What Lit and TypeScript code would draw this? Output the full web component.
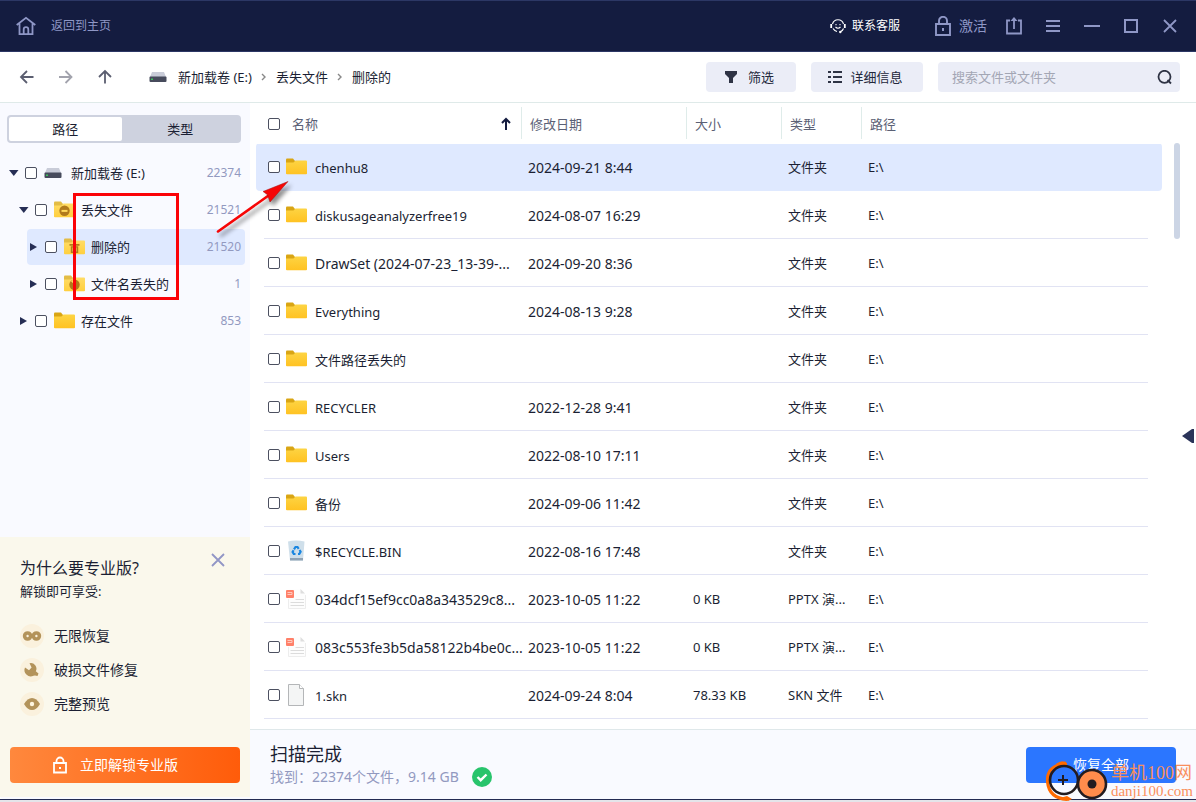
import { LitElement, html, css, svg } from "lit";
import { customElement } from "lit/decorators.js";
import { classMap } from "lit/directives/class-map.js";

type Badge = "minus" | "trash" | "clock" | "";
interface Node { name: string; count: string; depth: number; open: boolean; icon: "disk" | "folder"; badge: Badge; active?: boolean }
interface Item { name: string; date: string; size: string; type: string; icon: "folder" | "bin" | "pptx" | "file" }

const TREE: Node[] = [
  { name: "新加载卷 (E:)", count: "22374", depth: 0, open: true, icon: "disk", badge: "" },
  { name: "丢失文件", count: "21521", depth: 1, open: true, icon: "folder", badge: "minus" },
  { name: "删除的", count: "21520", depth: 2, open: false, icon: "folder", badge: "trash", active: true },
  { name: "文件名丢失的", count: "1", depth: 2, open: false, icon: "folder", badge: "clock" },
  { name: "存在文件", count: "853", depth: 1, open: false, icon: "folder", badge: "" },
];

const DIR = "文件夹";
const ITEMS: Item[] = [
  { name: "chenhu8", date: "2024-09-21 8:44", size: "", type: DIR, icon: "folder" },
  { name: "diskusageanalyzerfree19", date: "2024-08-07 16:29", size: "", type: DIR, icon: "folder" },
  { name: "DrawSet (2024-07-23_13-39-...", date: "2024-09-20 8:36", size: "", type: DIR, icon: "folder" },
  { name: "Everything", date: "2024-08-13 9:28", size: "", type: DIR, icon: "folder" },
  { name: "文件路径丢失的", date: "", size: "", type: DIR, icon: "folder" },
  { name: "RECYCLER", date: "2022-12-28 9:41", size: "", type: DIR, icon: "folder" },
  { name: "Users", date: "2022-08-10 17:11", size: "", type: DIR, icon: "folder" },
  { name: "备份", date: "2024-09-06 11:42", size: "", type: DIR, icon: "folder" },
  { name: "$RECYCLE.BIN", date: "2022-08-16 17:48", size: "", type: DIR, icon: "bin" },
  { name: "034dcf15ef9cc0a8a343529c8...", date: "2023-10-05 11:22", size: "0 KB", type: "PPTX 演...", icon: "pptx" },
  { name: "083c553fe3b5da58122b4be0c...", date: "2023-10-05 11:22", size: "0 KB", type: "PPTX 演...", icon: "pptx" },
  { name: "1.skn", date: "2024-09-24 8:04", size: "78.33 KB", type: "SKN 文件", icon: "file" },
];

const diskIcon = html`<svg width="18" height="12" viewBox="0 0 18 12">
  <path d="M3 1h12l2 5H1z" fill="#c9ccd8"/><rect x=".5" y="5.5" width="17" height="5.5" rx="1" fill="#474b5c"/>
  <rect x="2" y="7.5" width="2" height="1.5" fill="#3fc25d"/></svg>`;

const folderIcon = (badge: Badge = "") => html`<svg width="21" height="18" viewBox="0 0 21 18">
  <defs><linearGradient id="f" x1="0" y1="0" x2="0" y2="1"><stop offset="0" stop-color="#fdd443"/><stop offset="1" stop-color="#ffc222"/></linearGradient>
  <linearGradient id="g" x1="0" y1="0" x2="0" y2="1"><stop offset="0" stop-color="#ffdc66"/><stop offset="1" stop-color="#ffcf3e"/></linearGradient></defs>
  <path d="M0 1.500Q0 .5 1 .5h6l2 2.500v2H0z" fill=${badge ? "#e3bc45" : "#d9a514"}/>
  <path d="M0 4.500h7.500l2-2H20q1 0 1 1V15.500q0 .8-1 .8H1q-1 0-1-.8z" fill=${badge ? "url(#g)" : "url(#f)"}/>
  ${badge === "minus" ? svg`<circle cx="10.500" cy="9.800" r="5.200" fill="#b17a1c"/><rect x="7.500" y="8.900" width="6" height="2" fill="#ffd95c"/>` : ""}
  ${badge === "trash" ? svg`<path d="M5.500 6h3.500V4.800h3V6h3.500v1.800h-10zM6.800 8.300h7.400V15H6.800z" fill="#b17a1c"/><path d="M9 9.500v4M12 9.500v4" stroke="#ffd95c"/>` : ""}
  ${badge === "clock" ? svg`<circle cx="10.500" cy="9.800" r="5.200" fill="#b17a1c"/><path d="M10.500 9.800 7 6.200a5 5 0 0 1 3.500-1.600z" fill="#ffd95c"/>` : ""}
</svg>`;

const binIcon = html`<svg width="21" height="22" viewBox="0 0 21 22">
  <path d="M2 1.500q8-2 16.500 0L17 20.500H4z" fill="#cfdfea"/><path d="M4 18h13v2.500H4z" fill="#8fa3b5"/>
  <g fill="none" stroke="#1a86e0" stroke-width="2.200"><path d="M8 9.300 9.500 7h2l1.200 1.800"/><path d="M13.600 10l1 1.700-1.300 2.300H12"/><path d="M9.500 14H7.800l-1.200-2 1-1.700"/></g></svg>`;

const pptxIcon = html`<svg width="21" height="22" viewBox="0 0 21 22">
  <path d="M2.500 1.500h12l5 5v14h-17z" fill="#fdfdfd"/><path d="M2.500 11v9.500h17V7" fill="none" stroke="#ededed"/><path d="M14.500 1v4.500H19z" fill="#dedede"/>
  <rect x="0" y="2" width="8" height="8" rx="1" fill="#ff8069"/><path d="M1.500 4.500h4.500v2H1.500" fill="none" stroke="#ffc9bd"/>
  <path d="M9.500 11.500H18M4.500 14.500H18M4.500 17.500H18" stroke="#dcdcdc"/></svg>`;

const fileIcon = html`<svg width="21" height="24" viewBox="0 0 21 24">
  <path d="M2.500 1.500h11l4 4v17h-15z" fill="#f4f5f5" stroke="#b4b6b8"/><path d="M13.500 1.500v4h4" fill="#fff" stroke="#b4b6b8"/></svg>`;

const ITEM_ICONS = { folder: folderIcon(), bin: binIcon, pptx: pptxIcon, file: fileIcon };

@customElement("app-root")
export class AppRoot extends LitElement {
  static styles = css`
    :host {
      display: flex; flex-direction: column; position: relative; box-sizing: border-box;
      height: 100vh; padding-bottom: 2px; background: #e4e5ea; overflow: hidden;
      font: 13px/20px "Noto Sans", "Noto Sans CJK SC", sans-serif; color: #1b1f33;
    }
    * { box-sizing: border-box; }
    svg { display: block; flex: none; }
    button { font: inherit; color: inherit; border: 0; padding: 0; background: none; display: flex; align-items: center; }
    a { color: inherit; text-decoration: none; }
    .box { appearance: none; flex: none; width: 12px; height: 12px; margin: 0; border: 1px solid #4c5060; border-radius: 2px; background: #fff; }

    .titlebar { display: flex; align-items: center; height: 52px; flex: none; padding: 0 17px 0 16px; background: #141c40; border-top: 1px solid #2c3765; border-bottom: 1px solid #2c3765; color: #8f97c6; }
    .home { gap: 15px; font-size: 12px; }
    .spacer { flex: 1; }
    .service { gap: 6px; font-size: 12px; color: #fff; margin-right: 34px; }
    .activate { gap: 7px; font-size: 14px; margin-right: 18px; }
    .tools { display: flex; gap: 21px; }

    .toolbar { display: flex; align-items: center; height: 51px; flex: none; padding: 0 16px 0 19px; background: #fff; border-bottom: 1px solid #dfeae9; }
    .arrows { display: flex; gap: 23px; }
    .crumbs { display: flex; align-items: center; gap: 9px; margin-left: 36px; flex: 1; }
    .crumbs svg:first-child { margin-right: 2px; }
    .chip { height: 30px; border-radius: 4px; background: #ebedf7; justify-content: center; margin-right: 15px; padding-right: 4px; gap: 10px; color: #23283b; }
    .filter { width: 90px; }
    .detail { width: 112px; gap: 8px; }
    .search { display: flex; align-items: center; width: 242px; height: 30px; border-radius: 4px; background: #ebedf7; padding: 0 8px 0 14px; }
    .search input { flex: 1; min-width: 0; border: 0; outline: 0; background: none; font: inherit; padding: 0; }
    .search input::placeholder { color: #a3a6b4; }

    .body { flex: 1; min-height: 0; display: flex; background: #fff; border-bottom: 1px solid #232b52; }
    .side { width: 250px; flex: none; display: flex; flex-direction: column; background: #f9faff; padding-bottom: 2px; border-radius: 0 0 0 4px; }
    .tabs { display: flex; margin: 12px 9px 0 7px; height: 28px; padding: 2px; border-radius: 4px; background: #ced2df; }
    .tabs button { flex: 1; justify-content: center; border-radius: 2px; }
    .tabs .on { flex: 0 0 49%; background: #fff; }
    .tree { margin-top: 12px; flex: 1; }
    .node { display: flex; align-items: center; height: 36px; margin: 0 5px 1px 7px; padding: 0 4px 0 2px; border-radius: 4px; }
    .d1 { margin-left: 17px; }
    .d2 { margin-left: 27px; }
    .node.active { background: #dfe9ff; }
    .node .box { margin: 0 7px 0 6px; }
    .node label { display: flex; align-items: center; gap: 6px; flex: 1; }
    .pic { width: 21px; display: flex; justify-content: center; flex: none; }
    .node .pic { justify-content: flex-start; }
    .count { font-size: 12px; color: #9299bf; }

    .promo { background: #faf8ec; padding: 17px 10px 14px; }
    .promo-head { display: flex; justify-content: space-between; align-items: flex-start; padding: 0 14px 0 10px; margin-top: -4px; }
    .promo h2 { margin: 6px 0 0; font-size: 16px; line-height: 24px; font-weight: 400; }
    .promo p { margin: 1px 0 0 10px; }
    .perks { list-style: none; margin: 18px 0 0 10px; padding: 0; font-size: 14px; }
    .perks li { display: flex; align-items: center; gap: 10px; height: 34px; }
    .unlock { width: 100%; height: 36px; margin-top: 26px; padding-right: 20px; border-radius: 4px; justify-content: center; gap: 12px; font-size: 14px; color: #fff; background: linear-gradient(90deg, #ff883d, #ff5c0a); }

    .main { flex: 1; min-width: 0; display: flex; flex-direction: column; }
    .files { flex: 1; min-height: 0; display: flex; padding-left: 6px; overflow: hidden; }
    .list { flex: 1; min-width: 0; }
    table { width: 100%; border-collapse: collapse; table-layout: fixed; }
    .c-name { width: 265px; } .c-date { width: 165px; } .c-size { width: 95px; } .c-type { width: 80px; }
    th { height: 40px; padding: 1px 0 0 9px; text-align: left; font-weight: 400; color: #5b6075; background: linear-gradient(#dfecea, #dfecea) no-repeat left center / 1px 32px; }
    th:first-child { background: none; padding-left: 12px; }
    .head { display: flex; align-items: center; gap: 12px; padding-right: 10px; }
    .head label { flex: 1; }
    td { height: 48px; padding: 2px 0 0 7px; white-space: nowrap; }
    td:first-child { padding: 0 0 0 12px; border-radius: 4px 0 0 4px; }
    td:last-child { border-radius: 0 4px 4px 0; }
    td.kind { padding-top: 0; }
    tbody tr { background: linear-gradient(#e1e3f3, #e1e3f3) no-repeat 8px bottom / calc(100% - 22px) 1px; }
    tbody tr.active { background: none; }
    tr.active td { background: linear-gradient(#dfe9ff, #dfe9ff) no-repeat 0 1px; }
    .cell { display: flex; align-items: center; }
    .cell label { padding-top: 2px; }
    .cell .pic { margin: 0 8px 0 6px; }
    .numeric { font-size: 14px; }
    .track { width: 6px; margin: 40px 2px 0 12px; }
    .thumb { height: 96px; border-radius: 3px; background: #ccd5e5; }
    .expand { margin: 40px 2px 0 0; }

    .status { flex: none; height: 70px; display: flex; align-items: center; justify-content: space-between; padding: 0 20px; background: #f9faff; border-top: 1px solid #dfe8ea; }
    .summary { padding-bottom: 2px; }
    .status h1 { margin: 0; font-size: 18px; line-height: 26px; font-weight: 400; }
    .found { display: flex; align-items: center; gap: 13px; font-size: 14px; line-height: 20px; color: #9299bf; }
    .recover { width: 150px; height: 36px; border-radius: 4px; justify-content: center; background: #2b76ff; color: #fff; font-size: 14px; }

    .frame { position: absolute; left: 73px; top: 193px; width: 106px; height: 107px; border: 3px solid #fb0207; pointer-events: none; }
    .pointer { position: absolute; left: 210px; top: 174px; pointer-events: none; filter: drop-shadow(3px 4px 2px rgba(0, 0, 0, .45)); }
    .mark { position: absolute; right: 3px; bottom: 0; display: flex; align-items: center; gap: 1px; pointer-events: none; color: #f98f5c; }
    .mark-text { display: flex; flex-direction: column; }
    .mark-name { font: 18px/20px "Liberation Serif", "Noto Sans CJK SC", serif; }
    .mark-url { font: 15px/17px "Liberation Serif", serif; }
  `;

  private titlebar() {
    return html`<header class="titlebar">
      <button class="home"><svg width="20" height="20" viewBox="0 0 20 20" fill="none" stroke="#8f97c6" stroke-width="1.800"><path d="M.7 9 10 1.800 19.300 9M3.500 7.500v10.600h13V7.500"/><path d="M7.700 18v-4.500a2.300 2.300 0 0 1 4.600 0V18"/></svg><span>返回到主页</span></button>
      <span class="spacer"></span>
      <button class="service"><svg width="16" height="16" viewBox="0 0 16 16" fill="none" stroke="#fff" stroke-width="1.100"><path d="M2.500 6a5.700 5.700 0 0 1 11 0M3 10.500q1.500 2.500 4 3"/><path d="M1.200 6v4M14.800 6v4" stroke-width="1.800"/><path d="M13.500 10.500q-.8 2-2.500 3"/><circle cx="10.300" cy="14" r="1.200" fill="#fff" stroke="none"/><path d="M5.500 9q2.500 2.500 5 0M6 6v1.200M10 6v1.200"/></svg><span>联系客服</span></button>
      <button class="activate"><svg width="18" height="20" viewBox="0 0 18 20" fill="none" stroke="#8f97c6" stroke-width="1.900"><path d="M2 8h14v11H2zM5 8V4.800a4 4 0 0 1 8 0V8"/><path d="M9 12v3" stroke-width="2"/></svg><span>激活</span></button>
      <div class="tools">
        <button aria-label="分享"><svg width="18" height="20" viewBox="0 0 18 20" fill="none" stroke="#8f97c6" stroke-width="1.800"><path d="M5 4.500H2v13h14v-13h-3M9 13V3"/><path d="M5.500 5 9 1l3.500 4z" fill="#8f97c6" stroke="none"/></svg></button>
        <button aria-label="菜单"><svg width="18" height="20" viewBox="0 0 18 20" stroke="#8f97c6" stroke-width="2"><path d="M2 5h14M2 10h14M2 15h14"/></svg></button>
        <button aria-label="最小化"><svg width="18" height="20" viewBox="0 0 18 20" stroke="#8f97c6" stroke-width="2"><path d="M1 10h16"/></svg></button>
        <button aria-label="最大化"><svg width="18" height="20" viewBox="0 0 18 20" fill="none" stroke="#8f97c6" stroke-width="2"><path d="M3 4h12v12H3z"/></svg></button>
        <button aria-label="关闭"><svg width="18" height="20" viewBox="0 0 18 20" stroke="#8f97c6" stroke-width="1.800"><path d="m3 4 12 12M15 4 3 16"/></svg></button>
      </div>
    </header>`;
  }

  private toolbar() {
    const chevron = html`<svg width="6" height="10" viewBox="0 0 6 10" fill="none" stroke="#888" stroke-width="1.400"><path d="m1 2 3 3-3 3"/></svg>`;
    return html`<nav class="toolbar">
      <div class="arrows">
        <button aria-label="后退"><svg width="16" height="16" viewBox="0 0 16 16" fill="none" stroke="#5b5e70" stroke-width="1.800"><path d="M14.500 8H2.500M8 2 2 8l6 6"/></svg></button>
        <button aria-label="前进"><svg width="16" height="16" viewBox="0 0 16 16" fill="none" stroke="#a2a3ad" stroke-width="1.800"><path d="M1 8h12M7.500 2l6 6-6 6"/></svg></button>
        <button aria-label="向上"><svg width="16" height="16" viewBox="0 0 16 16" fill="none" stroke="#5b5e70" stroke-width="1.800"><path d="M8 14.500V2.500M2 8l6-6 6 6"/></svg></button>
      </div>
      <div class="crumbs">${diskIcon}<a href="#e">新加载卷 (E:)</a>${chevron}<a href="#lost">丢失文件</a>${chevron}<a href="#deleted">删除的</a></div>
      <button class="chip filter"><svg width="14" height="14" viewBox="0 0 14 14"><path d="M1 1h12v3L9 8v5H5V8L1 4z" fill="#2e3344"/></svg><span>筛选</span></button>
      <button class="chip detail"><svg width="15" height="14" viewBox="0 0 15 14" stroke="#2e3344" stroke-width="2"><path d="M1 2h3M6 2h9M1 7h3M6 7h9M1 12h3M6 12h9"/></svg><span>详细信息</span></button>
      <div class="search"><input type="text" aria-label="搜索" placeholder="搜索文件或文件夹" /><button aria-label="开始搜索"><svg width="15" height="15" viewBox="0 0 15 15" fill="none" stroke="#2e3344" stroke-width="1.800"><circle cx="7.500" cy="6.800" r="6"/><path d="m10.500 10 3.500 3.500"/></svg></button></div>
    </nav>`;
  }

  private sidebar() {
    const glyph = (art: unknown) => html`<svg width="24" height="24" viewBox="0 0 24 24"><circle cx="12" cy="12" r="12" fill="#faf1dd"/>${art}</svg>`;
    return html`<aside class="side">
      <div class="tabs"><button class="on">路径</button><button>类型</button></div>
      <div class="tree">
        ${TREE.map((n, i) => html`<div class=${classMap({ node: true, d1: n.depth === 1, d2: n.depth === 2, active: !!n.active })}>
          <button aria-label="展开"><svg width="10" height="10" viewBox="0 0 10 10"><path d=${n.open ? "M0 2h9.500L4.800 8z" : "M1 1v8l7-4z"} fill="#262e55"/></svg></button>
          <input class="box" type="checkbox" id="n${i}" />
          <label for="n${i}"><span class="pic">${n.icon === "disk" ? diskIcon : folderIcon(n.badge)}</span>${n.name}</label>
          <span class="count">${n.count}</span>
        </div>`)}
      </div>
      <section class="promo">
        <div class="promo-head"><h2>为什么要专业版?</h2><button aria-label="关闭"><svg width="16" height="20" viewBox="0 0 16 20" stroke="#9196c6" stroke-width="1.800"><path d="m2 4 12 12M14 4 2 16"/></svg></button></div>
        <p>解锁即可享受:</p>
        <ul class="perks">
          <li>${glyph(svg`<g fill="none" stroke="#b3935a" stroke-width="3.600"><circle cx="7.600" cy="12" r="3"/><circle cx="16.400" cy="12" r="3"/></g>`)}无限恢复</li>
          <li>${glyph(svg`<path d="M9.500 5.200a5.600 5.600 0 0 1 6.300 8l2.700 2.300-1 2.500-2.500-.5-1.500.2A6.300 6.300 0 0 1 5 9.500l4 2.700 2.600-2.700z" fill="#b3935a"/>`)}破损文件修复</li>
          <li>${glyph(svg`<path d="M4 12q3.500-6 8-6t8 6q-3.500 6-8 6t-8-6z" fill="#b3935a"/><circle cx="12" cy="12" r="2.200" fill="#fff6e0"/>`)}完整预览</li>
        </ul>
        <button class="unlock"><svg width="16" height="18" viewBox="0 0 16 18" fill="none" stroke="#fff" stroke-width="1.800"><path d="M2 7h12v9.500H2zM4.500 7V5a3.500 3.500 0 0 1 7 0v2"/><path d="M8 11v2" stroke-width="2"/></svg><span>立即解锁专业版</span></button>
      </section>
    </aside>`;
  }

  private files() {
    const nameStyle = (s: string) => classMap({ numeric: /\d{3}/.test(s) });
    return html`<div class="files">
      <div class="list"><table>
        <colgroup><col class="c-name" /><col class="c-date" /><col class="c-size" /><col class="c-type" /><col /></colgroup>
        <thead><tr>
          <th><div class="head"><input class="box" type="checkbox" id="all" /><label for="all">名称</label><svg width="10" height="14" viewBox="0 0 10 14" fill="none" stroke="#141c40" stroke-width="2"><path d="M5 13V2M1 6l4-4 4 4"/></svg></div></th>
          <th>修改日期</th><th>大小</th><th>类型</th><th>路径</th>
        </tr></thead>
        <tbody>${ITEMS.map((f, i) => html`<tr class=${classMap({ active: i === 0 })}>
          <td><div class="cell"><input class="box" type="checkbox" id="f${i}" /><span class="pic">${ITEM_ICONS[f.icon]}</span><label for="f${i}" class=${nameStyle(f.name)}>${f.name}</label></div></td>
          <td class="numeric">${f.date}</td><td class="kind">${f.size}</td><td class="kind">${f.type}</td><td class="kind">E:\\</td>
        </tr>`)}</tbody>
      </table></div>
      <div class="track"><div class="thumb"></div></div>
      <button class="expand" aria-label="展开预览"><svg width="12" height="16" viewBox="0 0 12 16"><path d="M0 8 10 1h2v14h-2z" fill="#2b3459"/></svg></button>
    </div>`;
  }

  render() {
    return html`${this.titlebar()}${this.toolbar()}
      <div class="body">${this.sidebar()}
        <main class="main">${this.files()}
          <footer class="status">
            <div class="summary"><h1>扫描完成</h1><div class="found"><span>找到：22374个文件，9.14 GB</span><svg width="20" height="20" viewBox="0 0 20 20"><circle cx="10" cy="10" r="10" fill="#28c46c"/><path d="m5.500 10 3.200 3.200L14.500 7.500" fill="none" stroke="#fff" stroke-width="2.400"/></svg></div></div>
            <button class="recover">恢复全部</button>
          </footer>
        </main>
      </div>
      <div class="frame"></div>
      <svg class="pointer" width="84" height="68" viewBox="0 0 84 68"><path d="M8 57.500 60 20.500" stroke="#f60606" stroke-width="2.600" stroke-linecap="round"/><path d="M78 7.500 53 17.500l4.500 3.200 2.500 7.300z" fill="#f60606" stroke="#a01010" stroke-width=".5"/></svg>
      <div class="mark">
        <svg width="64" height="42" viewBox="0 0 64 42" fill="none"><path d="M20 3Q0 6 1.500 22T21 39.500" stroke="#ff6a00" stroke-width="3"/><path d="M10 4q6-5 11-1v3zM14 38l8 3 4-2-5-3z" fill="#ff6a00"/>
          <circle cx="18" cy="20" r="14" stroke="#231c20" stroke-width="2.600"/><path d="M12 20h10M17 15v10" stroke="#231c20" stroke-width="2"/>
          <circle cx="46" cy="24" r="14" fill="#ff8c4c" stroke="#231c20" stroke-width="2.600"/><circle cx="46" cy="24" r="4.500" fill="#231c20"/></svg>
        <div class="mark-text"><span class="mark-name">单机100网</span><span class="mark-url">danji100.com</span></div>
      </div>`;
  }
}
